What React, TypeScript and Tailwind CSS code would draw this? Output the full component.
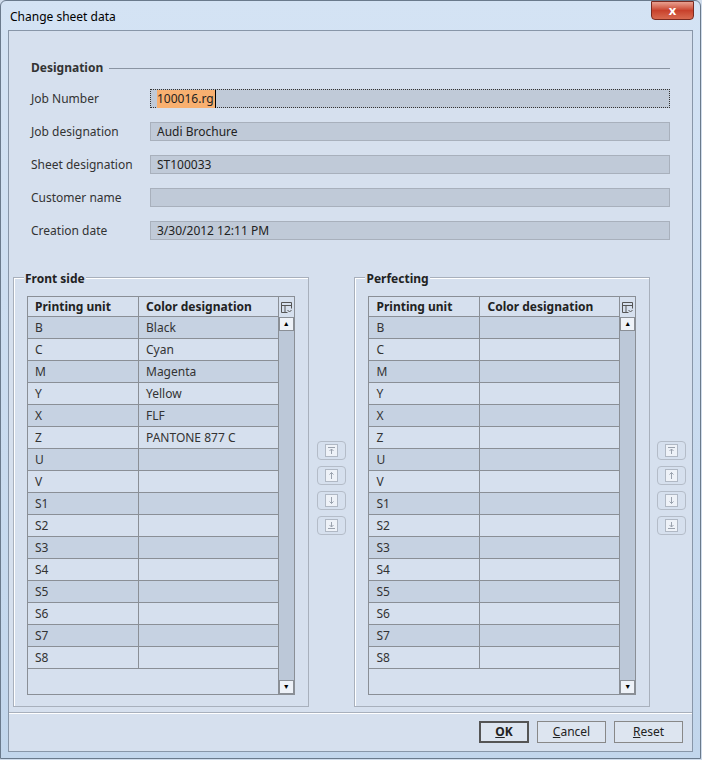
const units = ["B", "C", "M", "Y", "X", "Z", "U", "V", "S1", "S2", "S3", "S4", "S5", "S6", "S7", "S8"];
const front: Record<string, string> = { B: "Black", C: "Cyan", M: "Magenta", Y: "Yellow", X: "FLF", Z: "PANTONE 877 C" };

const fields = [
  ["Job Number", "100016.rg"],
  ["Job designation", "Audi Brochure"],
  ["Sheet designation", "ST100033"],
  ["Customer name", ""],
  ["Creation date", "3/30/2012 12:11 PM"],
];

function ArrowBtn({ kind }: { kind: "top" | "up" | "down" | "bottom" }) {
  return (
    <div className="flex h-[19px] w-[29px] items-center justify-center rounded-sm border border-[#b4bcc8] bg-[#d6e0ee]">
      <div className="flex h-[13px] w-[13px] items-center justify-center border border-[#b0b8c4] bg-[#eef2f8]">
        <svg width="9" height="9" viewBox="0 0 9 9" stroke="#9aa2ae" fill="none">
          {kind === "top" && <path d="M1 1.5h7M4.5 3v5M2.5 5l2-2 2 2" />}
          {kind === "up" && <path d="M4.5 1.5v6.5M2.5 3.5l2-2 2 2" />}
          {kind === "down" && <path d="M4.5 1v6.5M2.5 5.5l2 2 2-2" />}
          {kind === "bottom" && <path d="M1 7.5h7M4.5 1v5M2.5 4l2 2 2-2" />}
        </svg>
      </div>
    </div>
  );
}

function Table({ title, data }: { title: string; data: Record<string, string> }) {
  return (
    <div className="relative h-[430px] w-[297px] border border-[#a8b0bc] shadow-[inset_1px_1px_0_#fff] px-[13px] pt-[18px]">
      <span className="absolute -top-[8px] left-[10px] bg-[#d6e0ee] px-[1px] text-[12px] font-bold text-[#222]">{title}</span>
      <div className="flex h-[399px] border border-[#8a8f96]">
        <div className="flex-1">
          <div className="flex h-[20px] border-b border-[#8a8f96] text-[12px] font-bold text-[#222]">
            <div className="w-[111px] border-r border-[#8a8f96] pl-[7px] leading-[20px]">Printing unit</div>
            <div className="flex-1 pl-[7px] leading-[20px]">Color designation</div>
          </div>
          {units.map((u, i) => (
            <div key={u} className={`flex h-[22px] border-b border-[#8a8f96] text-[12px] text-[#333] ${i % 2 === 0 ? "bg-[#c6d2e2]" : "bg-[#d6e0ee]"}`}>
              <div className="w-[111px] border-r border-[#8a8f96] pl-[7px] leading-[21px]">{u}</div>
              <div className="flex-1 pl-[7px] leading-[21px]">{data[u] ?? ""}</div>
            </div>
          ))}
        </div>
        <div className="flex w-[16px] flex-col border-l border-[#8a8f96]">
          <div className="flex h-[20px] items-center justify-center">
            <svg width="11" height="11" viewBox="0 0 11 11" fill="none" stroke="#555">
              <path d="M0.5 0.5h10v6M0.5 0.5v10h6M0.5 3.5h10M4 3.5v7" />
              <path d="M6.5 8l2 2 2-2" />
            </svg>
          </div>
          <div className="flex flex-1 flex-col bg-[#bcc8d8]">
            <div className="flex h-[14px] items-center justify-center border border-[#8a8f96] bg-[#eef2f8] text-[7px]">▲</div>
            <div className="flex-1" />
            <div className="flex h-[14px] items-center justify-center border border-[#8a8f96] bg-[#eef2f8] text-[7px]">▼</div>
          </div>
        </div>
      </div>
    </div>
  );
}

export default function App() {
  return (
    <div className="h-[760px] w-[702px] bg-[#cfdcec] p-0 font-['Liberation_Sans']">
      <div className="flex h-[759px] w-[701px] flex-col rounded-t-md border border-[#6a7a8c] bg-gradient-to-b from-[#d4e3f4] to-[#c2d6ec]">
        <div className="flex h-[29px] items-start justify-between pl-[9px]">
          <span className="pt-[7px] text-[12px] text-black">Change sheet data</span>
          <div className="mr-[6px] flex h-[19px] w-[43px] items-center justify-center rounded-b-[4px] border border-[#7a2a20] bg-gradient-to-b from-[#e8a090] via-[#c8412c] to-[#d86a50] text-[13px] font-bold text-white">x</div>
        </div>
        <div className="mx-[7px] mb-[6px] flex flex-1 flex-col border border-[#8896a8] bg-[#d6e0ee]">
          <div className="px-[22px] pt-[28px]">
            <div className="flex items-center gap-[6px]">
              <span className="text-[12px] font-bold text-[#333]">Designation</span>
              <div className="h-px flex-1 bg-[#8a94a2]" />
            </div>
            <div className="mt-[12px] flex flex-col gap-[14px]">
              {fields.map(([l, v], i) => (
                <div key={l} className="flex items-center">
                  <span className="w-[119px] text-[12px] text-[#333]">{l}</span>
                  <div className={`flex h-[19px] flex-1 items-center border bg-[#c0cad8] pl-[6px] text-[12px] text-[#222] ${i === 0 ? "border-dotted border-[#333]" : "border-[#a8b0bc]"}`}>
                    {i === 0 ? <span className="border-r border-black bg-[#f8b070] pr-[1px]">{v}</span> : v}
                  </div>
                </div>
              ))}
            </div>
          </div>
          <div className="mt-[37px] flex pl-[4px]">
            <Table title="Front side" data={front} />
            <div className="flex w-[46px] flex-col items-center gap-[6px] pt-[164px]">
              <ArrowBtn kind="top" /><ArrowBtn kind="up" /><ArrowBtn kind="down" /><ArrowBtn kind="bottom" />
            </div>
            <Table title="Perfecting" data={{}} />
            <div className="flex w-[42px] flex-col items-center gap-[6px] pt-[164px]">
              <ArrowBtn kind="top" /><ArrowBtn kind="up" /><ArrowBtn kind="down" /><ArrowBtn kind="bottom" />
            </div>
          </div>
          <div className="mt-[5px] border-t border-[#a8b0bc] shadow-[0_1px_0_#fff]" />
          <div className="flex justify-end gap-[8px] pr-[9px] pt-[8px] text-[12px] text-[#222]">
            <div className="flex h-[22px] w-[50px] items-center justify-center border-2 border-[#555] bg-[#dde5f0] font-bold"><u>O</u>K</div>
            <div className="flex h-[22px] w-[69px] items-center justify-center border border-[#888] bg-[#dde5f0]"><u>C</u>ancel</div>
            <div className="flex h-[22px] w-[69px] items-center justify-center border border-[#888] bg-[#dde5f0]"><u>R</u>eset</div>
          </div>
        </div>
      </div>
    </div>
  );
}
